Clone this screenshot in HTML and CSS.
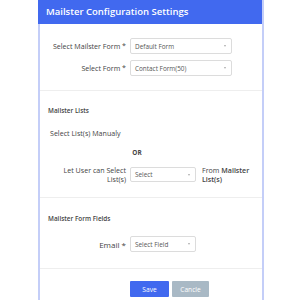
FILE: index.html
```html
<!DOCTYPE html>
<html>
<head>
<meta charset="utf-8">
<link rel="stylesheet" href="styles.css">
</head>
<body>
<div class="card">
  <div class="header">Mailster Configuration Settings</div>
  <div class="section s1">
    <div class="row">
      <label class="lbl">Select Mailster Form *</label>
      <div class="select wide"><span>Default Form</span><i class="caret"></i></div>
    </div>
    <div class="row">
      <label class="lbl">Select Form *</label>
      <div class="select wide"><span>Contact Form(50)</span><i class="caret"></i></div>
    </div>
  </div>
  <div class="section s2">
    <div class="sub">Mailster Lists</div>
    <div class="manual">Select List(s) Manualy</div>
    <div class="or">OR</div>
    <div class="row user">
      <label class="lbl two">Let User can Select<br>List(s)</label>
      <div class="select short"><span>Select</span><i class="caret"></i></div>
      <div class="from">From <b>Mailster</b><br><b>List(s)</b></div>
    </div>
  </div>
  <div class="section s3">
    <div class="sub">Mailster Form Fields</div>
    <div class="row">
      <label class="lbl email">Email *</label>
      <div class="select short tall"><span>Select Field</span><i class="caret"></i></div>
    </div>
  </div>
  <div class="footer">
    <button class="btn save">Save</button>
    <button class="btn cancel">Cancle</button>
  </div>
</div>
</body>
</html>
```
FILE: styles.css
```css
html, body {
  margin: 0;
  padding: 0;
  background: #ffffff;
}
body {
  font-family: "Open Sans", "Liberation Sans", sans-serif;
  color: #444;
}
.card {
  width: 222px;
  margin-left: 38px;
  height: 300px;
  border-left: 2px solid #c4cef8;
  border-right: 2px solid #c4cef8;
}
.header {
  background: #4169ef;
  color: #fff;
  height: 24px;
  line-height: 23px;
  font-size: 9.5px;
  font-weight: 600;
  padding-left: 8px;
  margin-left: -2px;
}
.section {
  border-bottom: 1px solid #eeeeee;
}
.s1 {
  padding: 14px 0 14px;
  display: flex;
  flex-direction: column;
  gap: 6px;
}
.row {
  display: flex;
  align-items: center;
}
.lbl {
  width: 86px;
  text-align: right;
  font-size: 7.1px;
  color: #444;
  margin-right: 4px;
  white-space: nowrap;
}
.lbl.two {
  line-height: 9px;
}
.lbl.email {
  font-size: 8px;
}
.select {
  height: 16px;
  box-sizing: border-box;
  border: 1px solid #dcdcdc;
  border-radius: 2px;
  display: flex;
  align-items: center;
  justify-content: space-between;
  padding: 0 5px 0 4px;
  font-size: 6.4px;
  color: #555;
}
.select.wide {
  width: 102px;
}
.select.short {
  width: 66px;
  height: 15px;
}
.select.short.tall {
  height: 16px;
}
.caret {
  width: 0;
  height: 0;
  border-left: 1.5px solid transparent;
  border-right: 1.5px solid transparent;
  border-top: 2px solid #aaa;
}
.s2 {
  padding: 14.5px 0 13.5px;
}
.sub {
  font-size: 6.4px;
  font-weight: 600;
  color: #444;
  padding-left: 8px;
  line-height: 9px;
}
.manual {
  font-size: 7.1px;
  padding-left: 10px;
  margin-top: 14px;
  line-height: 9px;
}
.or {
  font-size: 6.4px;
  font-weight: 700;
  text-align: center;
  width: 194px;
  margin-top: 10px;
  line-height: 9px;
}
.row.user {
  margin-top: 9px;
}
.from {
  margin-left: 6px;
  font-size: 7.1px;
  line-height: 9px;
  white-space: nowrap;
}
.from b {
  font-weight: 600;
}
.s3 {
  padding: 15.5px 0 16px;
}
.s3 .row {
  margin-top: 13.5px;
}
.footer {
  display: flex;
  gap: 3px;
  padding: 12px 0 0 90px;
}
.btn {
  height: 16px;
  border: none;
  border-radius: 1px;
  color: #fff;
  font-family: "Open Sans", "Liberation Sans", sans-serif;
  font-size: 6.6px;
  padding: 0;
}
.save {
  width: 39px;
  background: #4169ef;
}
.cancel {
  width: 37px;
  background: #a9b9c5;
}
```
